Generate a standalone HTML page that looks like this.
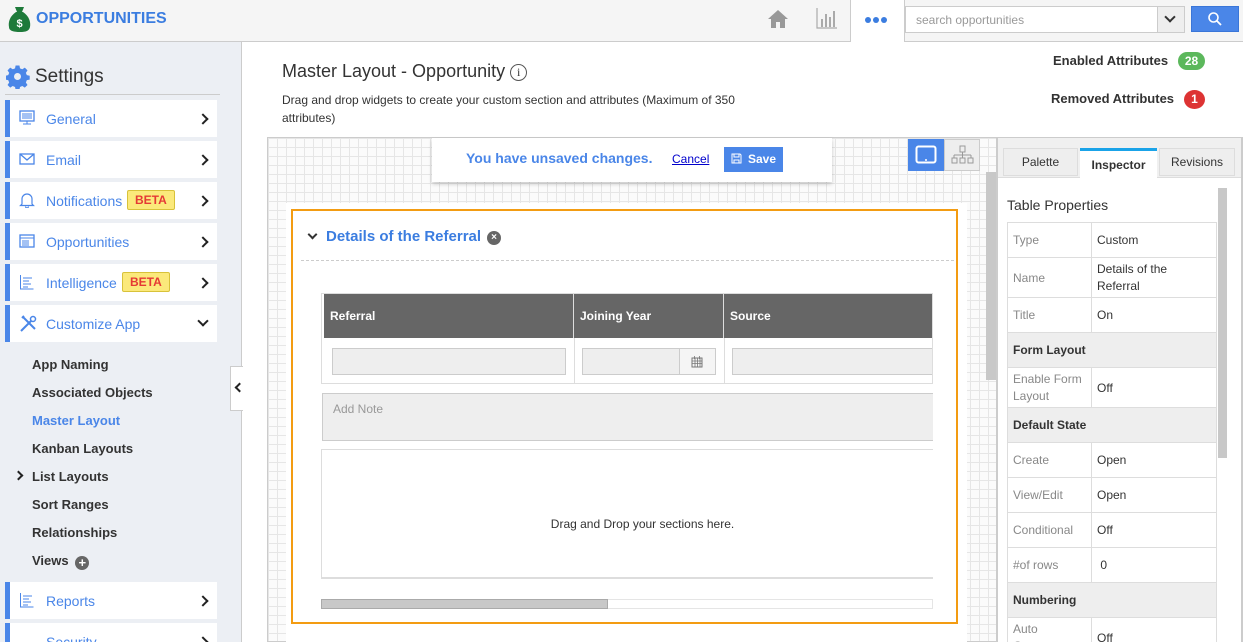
<!DOCTYPE html>
<html style="overflow:hidden;height:642px"><head><meta charset="utf-8"><style>
*{box-sizing:border-box;margin:0;padding:0}
body{width:1243px;height:642px;overflow:hidden;font-family:"Liberation Sans",sans-serif;background:#fff;position:relative;color:#333}
.a{position:absolute}
.top{left:0;top:0;width:1243px;height:42px;background:#f5f5f5;border-bottom:1px solid #ccc}
.side{left:0;top:42px;width:242px;height:600px;background:#eceff4;border-right:1px solid #ccc}
.mi{position:absolute;left:5px;width:212px;height:37px;background:#fff;border-left:5px solid #4a86e8}
.mi span.t{position:absolute;left:36px;top:11px;font-size:14px;color:#4a86e8}
.mi .chev{position:absolute;right:10px;top:15px;width:8px;height:8px;border-right:2.5px solid #222;border-top:2.5px solid #222;transform:rotate(45deg)}
.mi svg{position:absolute;left:9px;top:10px}
.beta{position:absolute;top:8px;background:#fbe97b;border:1px solid #d8c23a;color:#e53935;font-weight:bold;font-size:12px;padding:2px 7px;border-radius:2px}
.sub{position:absolute;left:32px;font-size:13px;font-weight:bold;color:#333}
.grid{background-color:#fbfbfb;background-image:linear-gradient(#e6e6e6 1px,transparent 1px),linear-gradient(90deg,#e6e6e6 1px,transparent 1px);background-size:9px 9px}
.tp td{border:1px solid #ddd;font-size:12px;padding:0 5px;vertical-align:middle}
.tp td.k{color:#888;width:84px}
.tp td.h{background:#eee;font-weight:bold;color:#333}
.th{position:absolute;top:0;height:44px;background:#666;color:#fff;font-weight:bold;font-size:12px;padding:15px 6px;border-right:1px solid #ddd}
.inp{position:absolute;height:27px;background:#eee;border:1px solid #ccc}
</style></head><body>
<div class="a top"></div>
<svg class="a" style="left:8px;top:6px" width="23" height="26" viewBox="0 0 23 26"><path d="M7 1h9l-2 5h-5z" fill="#1e7a3a"/><path d="M8 6h7c6 4 8 10 7 15-1 4-4 5-10 5S1 25 1 21C0 16 2 10 8 6z" fill="#1e7a3a"/><text x="11.5" y="21" font-size="11" font-weight="bold" fill="#fff" text-anchor="middle" font-family="Liberation Sans">$</text></svg>
<div class="a" style="left:36px;top:10px;font-size:16px;font-weight:bold;color:#3b7de0">OPPORTUNITIES</div>
<svg class="a" style="left:767px;top:9px" width="22" height="20" viewBox="0 0 22 20"><path d="M11 1L1 10h3v9h5v-6h4v6h5v-9h3z" fill="#999"/></svg>
<svg class="a" style="left:816px;top:7px" width="22" height="22" viewBox="0 0 22 22"><path d="M1 1v20h20" stroke="#aaa" fill="none" stroke-width="1.2"/><rect x="5" y="12" width="2" height="8" fill="#aaa"/><rect x="9" y="7" width="2" height="13" fill="#aaa"/><rect x="13" y="10" width="2" height="10" fill="#aaa"/><rect x="17" y="4" width="2" height="16" fill="#aaa"/></svg>
<div class="a" style="left:850px;top:0;width:55px;height:42px;background:#fff;border-left:1px solid #ccc;border-right:1px solid #ccc"></div>
<div class="a" style="left:865px;top:17px;font-size:0"><span style="display:inline-block;width:6px;height:6px;border-radius:50%;background:#3b7de0;margin-right:2px"></span><span style="display:inline-block;width:6px;height:6px;border-radius:50%;background:#3b7de0;margin-right:2px"></span><span style="display:inline-block;width:6px;height:6px;border-radius:50%;background:#3b7de0"></span></div>
<div class="a" style="left:905px;top:6px;width:280px;height:27px;background:#fff;border:1px solid #ccc;font-size:12px;color:#999;padding:6px 10px">search opportunities</div>
<div class="a" style="left:1157px;top:7px;width:27px;height:25px;background:#eee;border-left:1px solid #ccc"></div>
<div class="a" style="left:1166px;top:13px;width:8px;height:8px;border-right:2.5px solid #333;border-bottom:2.5px solid #333;transform:rotate(45deg)"></div>
<div class="a" style="left:1191px;top:6px;width:48px;height:26px;background:#4a86e8;border:1px solid #3a76d8"></div>
<svg class="a" style="left:1207px;top:11px" width="16" height="16" viewBox="0 0 16 16"><circle cx="6.5" cy="6.5" r="4.5" stroke="#fff" stroke-width="1.6" fill="none"/><path d="M10 10l4 4" stroke="#fff" stroke-width="1.8"/></svg>

<div class="a side"></div>
<svg class="a" style="left:6px;top:65px" width="24" height="24" viewBox="0 0 24 24"><path fill="#4a86e8" d="M10 1h4l.6 3 2.4 1 2.6-1.7 2.8 2.8L20.7 8.7l1 2.4 3 .6v4l-3 .6-1 2.4 1.7 2.6-2.8 2.8-2.6-1.7-2.4 1-.6 3h-4l-.6-3-2.4-1-2.6 1.7-2.8-2.8 1.7-2.6-1-2.4-3-.6v-4l3-.6 1-2.4L1.6 6.1 4.4 3.3 7 5l2.4-1z" transform="translate(0 -0.5) scale(.96)"/><circle cx="11.5" cy="11.5" r="3.5" fill="#eceff4"/></svg>
<div class="a" style="left:35px;top:66px;font-size:19px;color:#333">Settings</div>
<div class="a" style="left:5px;top:94px;width:215px;height:1px;background:#ccc"></div>

<div class="mi" style="top:100px"><svg width="16" height="16" viewBox="0 0 16 16"><rect x="1" y="1" width="14" height="10" fill="none" stroke="#4a86e8" stroke-width="1.3"/><path d="M3 4h10M3 6h10M3 8h10M8 11v3M4 14h8" stroke="#4a86e8"/></svg><span class="t">General</span><i class="chev"></i></div>
<div class="mi" style="top:141px"><svg width="16" height="16" viewBox="0 0 16 16"><rect x="1" y="3" width="14" height="10" fill="none" stroke="#4a86e8" stroke-width="1.3"/><path d="M1 3l7 6 7-6" fill="none" stroke="#4a86e8" stroke-width="1.3"/></svg><span class="t">Email</span><i class="chev"></i></div>
<div class="mi" style="top:182px"><svg width="16" height="16" viewBox="0 0 16 16"><path d="M3 12V7a5 5 0 0110 0v5l1.5 1.5h-13zM6.5 14.5a1.5 1.5 0 003 0" fill="none" stroke="#4a86e8" stroke-width="1.2"/></svg><span class="t">Notifications</span><span class="beta" style="left:117px">BETA</span><i class="chev"></i></div>
<div class="mi" style="top:223px"><svg width="16" height="16" viewBox="0 0 16 16"><rect x="1" y="2" width="14" height="12" fill="none" stroke="#4a86e8" stroke-width="1.3"/><path d="M1 5h14M3 8h7M3 10h7M3 12h7" stroke="#4a86e8"/></svg><span class="t">Opportunities</span><i class="chev"></i></div>
<div class="mi" style="top:264px"><svg width="16" height="16" viewBox="0 0 16 16"><path d="M1.5 1v14h13M4 4h9M4 7h6M4 10h8M4 13h5" stroke="#4a86e8" fill="none"/></svg><span class="t">Intelligence</span><span class="beta" style="left:112px">BETA</span><i class="chev"></i></div>
<div class="mi" style="top:305px"><svg width="18" height="18" viewBox="0 0 18 18"><path d="M2 16L12 6M4 2l12 12M3 3l2-2" stroke="#4a86e8" stroke-width="2" fill="none"/><circle cx="14" cy="4" r="2.5" fill="none" stroke="#4a86e8" stroke-width="1.5"/></svg><span class="t">Customize App</span><i class="chev" style="transform:rotate(135deg);top:12px"></i></div>

<div class="sub" style="top:357px">App Naming</div>
<div class="sub" style="top:385px">Associated Objects</div>
<div class="sub" style="top:413px;color:#4a86e8">Master Layout</div>
<div class="sub" style="top:441px">Kanban Layouts</div>
<div class="a" style="left:15px;top:472px;width:7px;height:7px;border-right:2.5px solid #222;border-top:2.5px solid #222;transform:rotate(45deg)"></div>
<div class="sub" style="top:469px">List Layouts</div>
<div class="sub" style="top:497px">Sort Ranges</div>
<div class="sub" style="top:525px">Relationships</div>
<div class="sub" style="top:553px">Views <span style="display:inline-block;width:14px;height:14px;border-radius:50%;background:#666;color:#fff;font-size:13px;line-height:14px;text-align:center;vertical-align:-2px;margin-left:3px">+</span></div>
<div class="mi" style="top:582px"><svg width="16" height="16" viewBox="0 0 16 16"><path d="M1.5 1v14h13M4 4h9M4 7h6M4 10h8M4 13h5" stroke="#4a86e8" fill="none"/></svg><span class="t">Reports</span><i class="chev"></i></div>
<div class="mi" style="top:623px"><span class="t">Security</span><i class="chev"></i></div>
<div class="a" style="left:230px;top:366px;width:13px;height:45px;background:#fff;border:1px solid #ccc;border-right:none"></div>
<div class="a" style="left:236px;top:384px;width:7px;height:7px;border-left:2.5px solid #222;border-bottom:2.5px solid #222;transform:rotate(45deg)"></div>

<div class="a" style="left:282px;top:61px;font-size:18px;color:#333">Master Layout - Opportunity <span style="display:inline-block;width:17px;height:17px;border:1.5px solid #555;border-radius:50%;font-size:12px;text-align:center;line-height:14px;vertical-align:1px;font-family:'Liberation Serif',serif">i</span></div>
<div class="a" style="left:282px;top:91px;width:480px;font-size:12px;line-height:18px;color:#333">Drag and drop widgets to create your custom section and attributes (Maximum of 350 attributes)</div>
<div class="a" style="left:1053px;top:53px;font-size:13px;font-weight:bold">Enabled Attributes</div>
<div class="a" style="left:1178px;top:52px;width:27px;height:18px;border-radius:9px;background:#5cb85c;color:#fff;font-size:12px;font-weight:bold;text-align:center;line-height:18px">28</div>
<div class="a" style="left:1051px;top:91px;font-size:13px;font-weight:bold">Removed Attributes</div>
<div class="a" style="left:1184px;top:90px;width:21px;height:19px;border-radius:50%;background:#d33;color:#fff;font-size:12px;font-weight:bold;text-align:center;line-height:19px">1</div>

<div class="a grid" style="left:267px;top:137px;width:730px;height:505px;border:1px solid #ccc"></div>
<div class="a" style="left:432px;top:138px;width:400px;height:44px;background:#fff;box-shadow:0 2px 4px rgba(0,0,0,.2)"></div>
<div class="a" style="left:466px;top:150px;font-size:14px;font-weight:bold;color:#4a86e8">You have unsaved changes.</div>
<div class="a" style="left:672px;top:152px;font-size:12px;color:#00c;text-decoration:underline">Cancel</div>
<div class="a" style="left:724px;top:147px;width:59px;height:25px;background:#4a86e8;color:#fff;font-size:12px;font-weight:bold;padding:5px 0 0 24px">Save</div>
<svg class="a" style="left:731px;top:153px" width="11" height="11" viewBox="0 0 11 11"><path d="M1 1h8l1 1v8H1z M3 1v3h5V1M3 10V7h5v3" fill="none" stroke="#fff"/></svg>
<div class="a" style="left:908px;top:139px;width:36px;height:32px;background:#4a86e8"></div>
<div class="a" style="left:944px;top:139px;width:36px;height:32px;background:#eee;border:1px solid #ccc"></div>
<svg class="a" style="left:915px;top:145px" width="22" height="20" viewBox="0 0 22 20"><rect x="1.5" y="1.5" width="19" height="16" rx="2" fill="none" stroke="#fff" stroke-width="2"/><circle cx="11" cy="15" r="1" fill="#fff"/></svg>
<svg class="a" style="left:951px;top:145px" width="24" height="20" viewBox="0 0 24 20"><g fill="none" stroke="#999"><rect x="9" y="1" width="5" height="6"/><path d="M11.5 7v3M3 10h17M3 10v3M11.5 10v3M20 10v3"/><rect x="1" y="13" width="5" height="5"/><rect x="9" y="13" width="5" height="5"/><rect x="17" y="13" width="5" height="5"/></g></svg>
<div class="a" style="left:986px;top:172px;width:10px;height:208px;background:#c8c8c8"></div>

<div class="a" style="left:286px;top:203px;width:681px;height:439px;background:#fff"></div>
<div class="a" style="left:291px;top:209px;width:667px;height:415px;border:2px solid #f39c12"></div>
<div class="a" style="left:309px;top:231px;width:7px;height:7px;border-right:2.5px solid #333;border-bottom:2.5px solid #333;transform:rotate(45deg)"></div>
<div class="a" style="left:326px;top:228px;font-size:15px;font-weight:bold;color:#3b7de0">Details of the Referral</div>
<div class="a" style="left:487px;top:231px;width:14px;height:14px;border-radius:50%;background:#666;color:#fff;font-size:10px;font-weight:bold;text-align:center;line-height:14px">×</div>
<div class="a" style="left:301px;top:260px;width:653px;border-top:1px dashed #ccc"></div>

<div class="a" style="left:321px;top:293px;width:612px;height:91px;border:1px solid #ddd;overflow:hidden">
<div class="th" style="left:2px;width:250px">Referral</div>
<div class="th" style="left:252px;width:150px">Joining Year</div>
<div class="th" style="left:402px;width:220px">Source</div>
<div class="a" style="left:252px;top:44px;height:47px;border-left:1px solid #ddd"></div>
<div class="a" style="left:402px;top:44px;height:47px;border-left:1px solid #ddd"></div>
<div class="inp" style="left:10px;top:54px;width:234px"></div>
<div class="inp" style="left:260px;top:54px;width:134px"></div>
<div class="a" style="left:357px;top:55px;width:36px;height:25px;background:#f5f5f5;border-left:1px solid #ccc"></div>
<svg class="a" style="left:369px;top:62px" width="12" height="12" viewBox="0 0 12 12"><rect x="1" y="2" width="10" height="9" fill="none" stroke="#777"/><path d="M1 5h10M1 7.5h10M4 2v9M6.5 2v9M9 2v9M3.5 0v3M8.5 0v3" stroke="#777" stroke-width=".8"/></svg>
<div class="inp" style="left:410px;top:54px;width:220px"></div>
</div>
<div class="a" style="left:322px;top:393px;width:611px;height:48px;background:#eee;border:1px solid #ccc;border-right:none;font-size:12px;color:#999;padding:8px 10px">Add Note</div>
<div class="a" style="left:321px;top:449px;width:612px;height:130px;border:1px solid #ddd;border-right:none;border-bottom:2px solid #ddd"></div>
<div class="a" style="left:321px;top:517px;width:643px;text-align:center;font-size:12px;color:#333">Drag and Drop your sections here.</div>
<div class="a" style="left:321px;top:599px;width:612px;height:10px;border:1px solid #e5e5e5"></div>
<div class="a" style="left:321px;top:599px;width:287px;height:10px;background:#c8c8c8;border:1px solid #aaa"></div>

<div class="a" style="left:997px;top:137px;width:246px;height:505px;background:#fff;border-left:1px solid #ccc;border-top:1px solid #ccc;border-right:2px solid #ccc"></div>
<div class="a" style="left:998px;top:138px;width:243px;height:40px;background:#f0f0f0;border-bottom:1px solid #ddd"></div>
<div class="a" style="left:1003px;top:148px;width:75px;height:28px;background:#eee;border:1px solid #ddd;font-size:12px;text-align:center;line-height:26px">Palette</div>
<div class="a" style="left:1080px;top:148px;width:77px;height:31px;background:#fff;border-top:3px solid #1aa3e8;font-size:12px;font-weight:bold;text-align:center;line-height:28px;color:#333">Inspector</div>
<div class="a" style="left:1159px;top:148px;width:76px;height:28px;background:#eee;border:1px solid #ddd;font-size:12px;text-align:center;line-height:26px">Revisions</div>
<div class="a" style="left:1007px;top:197px;font-size:14px;color:#333">Table Properties</div>
<div class="a" style="left:1218px;top:188px;width:9px;height:270px;background:#c8c8c8"></div>
<div class="a" style="left:1007px;top:222px;width:210px;height:420px;overflow:hidden">
<table class="tp" style="width:210px;border-collapse:collapse">
<tr style="height:35px"><td class="k">Type</td><td>Custom</td></tr>
<tr style="height:40px"><td class="k">Name</td><td style="line-height:17px">Details of the Referral</td></tr>
<tr style="height:35px"><td class="k">Title</td><td>On</td></tr>
<tr style="height:35px"><td class="h" colspan="2">Form Layout</td></tr>
<tr style="height:40px"><td class="k" style="line-height:17px">Enable Form Layout</td><td>Off</td></tr>
<tr style="height:35px"><td class="h" colspan="2">Default State</td></tr>
<tr style="height:35px"><td class="k">Create</td><td>Open</td></tr>
<tr style="height:35px"><td class="k">View/Edit</td><td>Open</td></tr>
<tr style="height:35px"><td class="k">Conditional</td><td>Off</td></tr>
<tr style="height:35px"><td class="k">#of rows</td><td>&nbsp;0</td></tr>
<tr style="height:35px"><td class="h" colspan="2">Numbering</td></tr>
<tr style="height:40px"><td class="k" style="line-height:17px">Auto Generate</td><td>Off</td></tr>
</table></div>
</body></html>
